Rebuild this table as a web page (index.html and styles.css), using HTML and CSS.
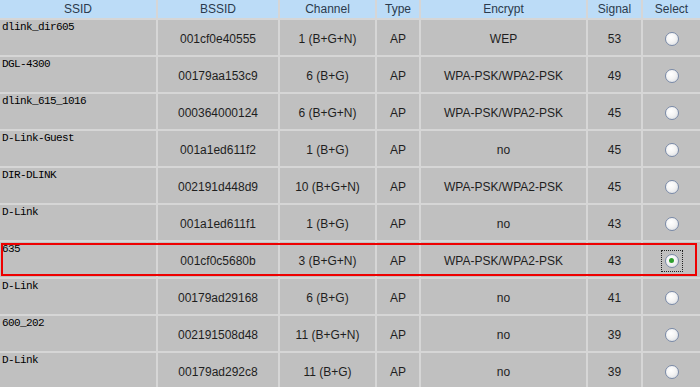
FILE: index.html
```html
<!DOCTYPE html>
<html>
<head>
<meta charset="utf-8">
<link rel="stylesheet" href="styles.css">
</head>
<body>
<div class="table">
  <div class="row head">
    <div class="c">SSID</div><div class="c">BSSID</div><div class="c">Channel</div><div class="c">Type</div><div class="c">Encrypt</div><div class="c">Signal</div><div class="c">Select</div>
  </div>
  <div class="row"><div class="c ssid">dlink_dir605</div><div class="c">001cf0e40555</div><div class="c">1 (B+G+N)</div><div class="c">AP</div><div class="c">WEP</div><div class="c">53</div><div class="c"><span class="radio"></span></div></div>
  <div class="row"><div class="c ssid">DGL-4300</div><div class="c">00179aa153c9</div><div class="c">6 (B+G)</div><div class="c">AP</div><div class="c">WPA-PSK/WPA2-PSK</div><div class="c">49</div><div class="c"><span class="radio"></span></div></div>
  <div class="row"><div class="c ssid">dlink_615_1016</div><div class="c">000364000124</div><div class="c">6 (B+G+N)</div><div class="c">AP</div><div class="c">WPA-PSK/WPA2-PSK</div><div class="c">45</div><div class="c"><span class="radio"></span></div></div>
  <div class="row"><div class="c ssid">D-Link-Guest</div><div class="c">001a1ed611f2</div><div class="c">1 (B+G)</div><div class="c">AP</div><div class="c">no</div><div class="c">45</div><div class="c"><span class="radio"></span></div></div>
  <div class="row"><div class="c ssid">DIR-DLINK</div><div class="c">002191d448d9</div><div class="c">10 (B+G+N)</div><div class="c">AP</div><div class="c">WPA-PSK/WPA2-PSK</div><div class="c">45</div><div class="c"><span class="radio"></span></div></div>
  <div class="row"><div class="c ssid">D-Link</div><div class="c">001a1ed611f1</div><div class="c">1 (B+G)</div><div class="c">AP</div><div class="c">no</div><div class="c">43</div><div class="c"><span class="radio"></span></div></div>
  <div class="row selected"><div class="c ssid">635</div><div class="c">001cf0c5680b</div><div class="c">3 (B+G+N)</div><div class="c">AP</div><div class="c">WPA-PSK/WPA2-PSK</div><div class="c">43</div><div class="c"><span class="focus"><span class="radio checked"></span></span></div></div>
  <div class="row"><div class="c ssid">D-Link</div><div class="c">00179ad29168</div><div class="c">6 (B+G)</div><div class="c">AP</div><div class="c">no</div><div class="c">41</div><div class="c"><span class="radio"></span></div></div>
  <div class="row"><div class="c ssid">600_202</div><div class="c">002191508d48</div><div class="c">11 (B+G+N)</div><div class="c">AP</div><div class="c">no</div><div class="c">39</div><div class="c"><span class="radio"></span></div></div>
  <div class="row"><div class="c ssid">D-Link</div><div class="c">00179ad292c8</div><div class="c">11 (B+G)</div><div class="c">AP</div><div class="c">no</div><div class="c">39</div><div class="c"><span class="radio"></span></div></div>
</div>
</body>
</html>
```

FILE: styles.css
```css
html, body {
  margin: 0;
  padding: 0;
  background: #d6d6d6;
  overflow: hidden;
}
.table {
  width: 700px;
  display: flex;
  flex-direction: column;
  gap: 2px;
  background: #d6d6d6;
  font-family: "Liberation Sans", Arial, sans-serif;
  font-size: 12px;
  color: #1e1e1e;
}
.row {
  position: relative;
  display: grid;
  grid-template-columns: 156px 120px 95px 42px 165px 53px 57px;
  column-gap: 2px;
  height: 35px;
}
.row.head {
  height: 18px;
}
.c {
  background: #c0c0c0;
  display: flex;
  align-items: center;
  justify-content: center;
  padding-top: 2px;
  box-sizing: border-box;
}
.head .c {
  background: #bcdcf7;
  color: #2b3a4c;
  font-size: 12px;
  padding-top: 0;
}
.c.ssid {
  justify-content: flex-start;
  align-items: flex-start;
  padding: 1px 0 0 2px;
  font-family: "Liberation Mono", "Courier New", monospace;
  font-size: 11px;
  letter-spacing: -0.6px;
  color: #000;
  line-height: 12px;
}
.selected::after {
  content: "";
  position: absolute;
  left: 1px;
  top: 1px;
  width: 692px;
  height: 29px;
  border: 2px solid #ee0000;
}
.radio {
  display: block;
  width: 12px;
  height: 12px;
  border-radius: 50%;
  border: 1px solid #7a8aa8;
  background: radial-gradient(circle at 40% 35%, #ffffff 0%, #f4f4f4 45%, #d4d8de 100%);
  position: relative;
}
.radio.checked::after {
  content: "";
  position: absolute;
  left: 3.5px;
  top: 3.5px;
  width: 5px;
  height: 5px;
  border-radius: 50%;
  background: #2ea02e;
}
.focus {
  display: block;
  padding: 3px;
  border: 1px dotted #222;
}
```
